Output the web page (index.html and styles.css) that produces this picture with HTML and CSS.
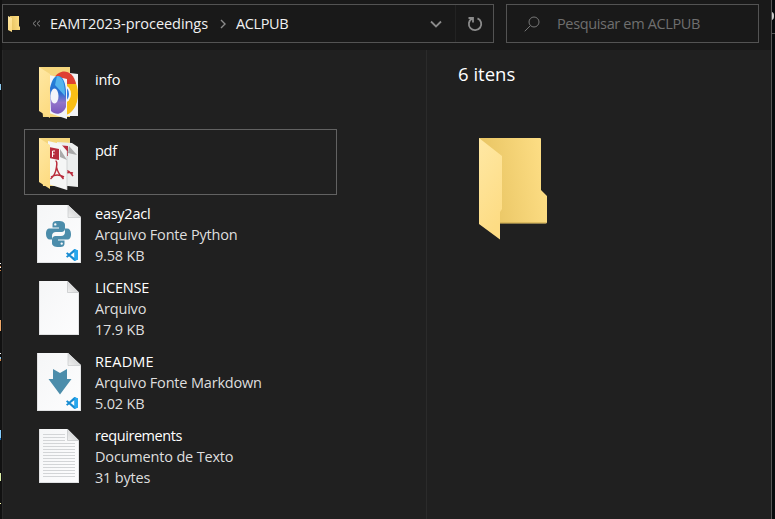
FILE: index.html
```
<!DOCTYPE html>
<html lang="pt-BR">
<head>
<meta charset="utf-8">
<title>ACLPUB</title>
<link rel="stylesheet" href="styles.css">
</head>
<body>
<svg class="defs" width="0" height="0" aria-hidden="true">
  <defs>
    <linearGradient id="back" x1="0" x2="1" y1="0.2" y2="0"><stop offset="0" stop-color="#e8c462"/><stop offset="1" stop-color="#ffe088"/></linearGradient>
    <linearGradient id="flap" x1="0" x2="0.3" y1="0" y2="1"><stop offset="0" stop-color="#ffe8a4"/><stop offset="1" stop-color="#fddc84"/></linearGradient>
    <linearGradient id="paper" x1="0" x2="1" y1="0" y2="1"><stop offset="0" stop-color="#f5f6f7"/><stop offset="1" stop-color="#fdfdfe"/></linearGradient>
    <linearGradient id="fold" x1="0" x2="1" y1="1" y2="0"><stop offset="0" stop-color="#f2f2f2"/><stop offset="1" stop-color="#bfc1c3"/></linearGradient>
    <linearGradient id="ring" x1="0" x2="0" y1="0" y2="1"><stop offset="0" stop-color="#2188dc"/><stop offset="0.45" stop-color="#286bd0"/><stop offset="0.7" stop-color="#9275cb"/><stop offset="1" stop-color="#7957bc"/></linearGradient>
    <symbol id="code" viewBox="0 0 12 12"><path d="M8.3 0 12 1.6v8.800L8.3 12 0 4.600 1.3 3.300 8.500 9V3L1.300 8.700 0 7.400z" fill="#168bd2"/><path d="M8.500 0 12 1.600v8.800L8.500 12z" fill="#27a7ee"/></symbol>
    <symbol id="page-large" viewBox="0 0 44 58"><path d="M0 0h31l13 12v46H0z" fill="url(#paper)"/><path d="M31 0v12.500h13z" fill="url(#fold)"/><path d="M31 0v12.500h13" fill="none" stroke="#c6c8ca" stroke-width=".7"/><path d="M.3 0v57.600h43.400V12" fill="none" stroke="#c9cbcd" stroke-width=".6"/></symbol>
    <symbol id="page-small" viewBox="0 0 40 54"><path d="M0 0h28.500L40 11.500V54H0z" fill="url(#paper)"/><path d="M28.500 0v11.500H40z" fill="url(#fold)"/><path d="M28.500 0v11.500H40" fill="none" stroke="#c2c4c6" stroke-width=".7"/><path d="M.3 0v53.600h39.400V11.500" fill="none" stroke="#c9cbcd" stroke-width=".6"/></symbol>
  </defs>
</svg>
<div class="desktop">
  <aside class="edge edge-left"><i class="m1"></i><i class="m2"></i><i class="m3"></i><i class="m4"></i><i class="m5"></i><i class="m6"></i><i class="m7"></i><i class="m8"></i></aside>
  <main class="window">
    <header class="toolbar">
      <nav class="address">
        <svg class="folder-mini" width="13" height="18" viewBox="0 0 13 18"><path d="M2 1h9v10l1 1v3H2z" fill="url(#back)"/><path d="M0 1l4 2v14l-4-2z" fill="url(#flap)"/></svg>
        <svg class="back-more" width="9" height="7" viewBox="0 0 9 7"><path d="M4 .7 1 3.500 4 6.300M8 .7 5 3.500 8 6.300" class="line dim"/></svg>
        <span class="crumb crumb-parent">EAMT2023-proceedings</span>
        <svg class="chevron" width="6" height="10" viewBox="0 0 6 10"><path d="M1 1l4 4-4 4" class="line"/></svg>
        <span class="crumb crumb-current">ACLPUB</span>
        <svg class="down" width="12" height="8" viewBox="0 0 12 8"><path d="M1 1.500l5 5 5-5" class="line heavy"/></svg>
        <span class="reload"><svg width="16" height="16" viewBox="0 0 16 16"><path d="M10.500 2.300A6.200 6.200 0 1 1 5 2.600M1.500 2H6v4.500" class="line heavy"/></svg></span>
      </nav>
      <div class="search">
        <svg width="16" height="16" viewBox="0 0 16 16"><circle cx="10" cy="6" r="5" class="line thin"/><path d="M6.400 9.600.7 15.300" class="line thin"/></svg>
        <span>Pesquisar em ACLPUB</span>
      </div>
    </header>
    <div class="content">
      <section class="files">
        <article class="item folder">
          <svg class="icon" width="70" height="64" viewBox="25 58 70 64">
            <path d="M39 67h31v50H43z" fill="#f5d67d"/>
            <path d="M62 72l16 2v42H61z" fill="#f1f2f4"/>
            <clipPath id="sheet"><path d="M54 68l24 6v43H54z"/></clipPath>
            <g clip-path="url(#sheet)"><ellipse cx="64" cy="94" rx="14" ry="21" fill="#f9be15"/><path d="M53 80C58 68 73 68 76 84H64z" fill="#df4032"/><ellipse cx="64" cy="94" rx="7" ry="9" fill="#f5f5f5"/><ellipse cx="64" cy="94" rx="5" ry="7" fill="#327ee4"/></g>
            <path d="M49 75l18 4v40l-18-6z" fill="#f2f4f8"/>
            <path d="M50 88C52 80 54 76 58 76c5 0 8 7 8 18v13c-3 7-10 9-15 4z" fill="url(#ring)"/>
            <path d="M57 76c5 0 8 6 8 20l-10-11z" fill="#54b4ed"/>
            <ellipse cx="54.500" cy="96" rx="4" ry="7.500" fill="#f2f4fa"/>
            <path d="M39 67l11 7v44l-11-7z" fill="url(#flap)"/>
          </svg>
          <div class="info"><span class="name">info</span></div>
        </article>
        <article class="item folder selected">
          <svg class="icon" width="69" height="64" viewBox="25 130 69 64">
            <path d="M39 138h31v48H43z" fill="#f5d67d"/>
            <path d="M57 142l15 1 6 4v40l-20-2z" fill="#eceeee"/>
            <path d="M57 145l11 1v10H57z" fill="#b72c3e"/><path d="M69 146l8 9-9-2z" fill="#aaa"/>
            <path d="M64 170q5 0 9 6M64 173q6-1 9 0" fill="none" stroke="#b92b3c" stroke-width="1.500"/>
            <path d="M48 141l13 3 6 7v39l-19-6z" fill="#f5f6f6"/>
            <path d="M67 151v39" stroke="#c5c7c8" stroke-width=".7"/>
            <path d="M49 147l10 2v11l-10-2z" fill="#b72c3e"/><path d="M60 149l7 11-7-3z" fill="#aaa"/>
            <path d="M52.500 157v-6h2.500M52.500 154h2" fill="none" stroke="#fff" stroke-width="1"/>
            <path d="M55.500 161q2 0 1 6-1 8-6 12M56.500 167q1 6 7 12M51 177q6-4 13 0" fill="none" stroke="#b92b3c" stroke-width="1.500"/>
            <path d="M39 138l11 7v44l-11-7z" fill="url(#flap)"/>
          </svg>
          <div class="info"><span class="name">pdf</span></div>
        </article>
        <article class="item">
          <svg class="icon" width="70" height="74" viewBox="25 201 70 74"><use href="#page-large" x="37" y="205" width="44" height="58"/>
            <g transform="translate(46 221)" fill="#4c8dab"><path id="snake" d="M12 0C7 0 6.500 1.500 6.500 4v2.500H13v1H4C1 7.500 0 9.500 0 13s1.500 5.500 4 5.500h2V15c0-2.500 1.500-4 4-4h5.500c2 0 3.500-1.500 3.500-3.500V4c0-2.500-2-4-7-4zM9.300 2.200a1.200 1.200 0 1 1 0 2.400 1.200 1.200 0 0 1 0-2.400z" fill-rule="evenodd"/><use href="#snake" transform="rotate(180 12.500 13)"/></g>
            <use href="#code" x="66" y="249" width="12" height="12"/></svg>
          <div class="info"><span class="name">easy2acl</span><span>Arquivo Fonte Python</span><span>9.58 KB</span></div>
        </article>
        <article class="item">
          <svg class="icon" width="70" height="74" viewBox="25 275 70 74"><use href="#page-small" x="39" y="281" width="40" height="54"/></svg>
          <div class="info"><span class="name">LICENSE</span><span>Arquivo</span><span>17.9 KB</span></div>
        </article>
        <article class="item">
          <svg class="icon" width="70" height="74" viewBox="25 349 70 74"><use href="#page-large" x="37" y="353" width="44" height="58"/><path d="M53 369l7 4 7-4v10h4.500L60 394.500 48.500 379H53z" fill="#4c8dab"/><use href="#code" x="66" y="397" width="12" height="12"/></svg>
          <div class="info"><span class="name wide">README</span><span>Arquivo Fonte Markdown</span><span>5.02 KB</span></div>
        </article>
        <article class="item">
          <svg class="icon" width="70" height="74" viewBox="25 423 70 74"><use href="#page-small" x="39" y="429" width="40" height="54"/><path d="M43 434.500h22M43 437.500h22M43 440.500h22M43 443.500h32M43 446.500h32M43 449.500h32M43 452.500h32M43 455.500h32M43 458.500h32M43 461.500h32M43 464.500h32M43 467.500h32M43 470.500h32M43 473.500h32M43 476.500h32" stroke="#d3d5d7"/></svg>
          <div class="info"><span class="name tight">requirements</span><span>Documento de Texto</span><span>31 bytes</span></div>
        </article>
      </section>
      <section class="details">
        <h1>6 itens</h1>
        <svg width="70" height="104" viewBox="478 137 70 104"><path d="M479 138h61q1 0 1 1v51l6 6v26q0 1.500-1.500 1.500H490z" fill="url(#back)"/><path d="M500 222.700h46" stroke="#c9a64c" stroke-width=".7"/><path d="M479 138l23 18v53l-2 3v27.500L479 224z" fill="url(#flap)"/></svg>
      </section>
    </div>
  </main>
  <aside class="edge edge-right"><i></i><b></b></aside>
</div>
</body>
</html>
```
FILE: styles.css
```
* { box-sizing: border-box; }
body { margin: 0; background: #101010; color: #fff; font: 14.5px/21px "Open Sans", "Noto Sans", sans-serif; overflow: hidden; }
svg { display: block; flex: none; }
.defs { position: absolute; }
.desktop { display: flex; width: 775px; height: 519px; }
.edge { position: relative; flex: none; overflow: hidden; }
.edge-left { width: 2px; background: #111; }
.edge-left i { position: absolute; left: 0; width: 1px; height: 3px; background: #fff; }
.edge-left .m1 { top: 84px; height: 6px; background: #8cc8ee; }
.edge-left .m2 { top: 263px; height: 8px; background: repeating-linear-gradient(#fff 0 1px, #111 1px 3px, #d68645 3px 4px); }
.edge-left .m3 { top: 320px; height: 11px; background: #f0a868; }
.edge-left .m4 { top: 353px; height: 1px; }
.edge-left .m5 { top: 357px; height: 4px; background: linear-gradient(#8cc8ee 50%, #d68645 50%); }
.edge-left .m6 { top: 430px; height: 10px; background: linear-gradient(#86cfff 80%, #1762a8 80%); }
.edge-left .m7 { top: 473px; height: 8px; background: #dcf0a8; }
.edge-left .m8 { top: 503px; height: 1px; background: #ffffae; }
.edge-right { width: 3px; background: #070b0d; }
.edge-right i { position: absolute; top: 12px; left: -3px; width: 5px; height: 8px; border: 2px solid #ccc; border-radius: 50%; }
.edge-right b { position: absolute; top: 33px; left: 0; width: 3px; height: 1px; background: #555; }
.window { display: flex; flex-direction: column; width: 770px; border-right: 1px solid #555; background: #191919; }
.toolbar { display: flex; gap: 12px; height: 50px; padding-top: 4px; }
.address, .search { display: flex; align-items: center; height: 39px; border: 1px solid #535353; }
.address { width: 492px; padding-left: 5px; }
.back-more { margin-left: 11px; }
.crumb { white-space: nowrap; color: #f1f1f1; }
.crumb-parent { width: 160px; margin-left: 9px; letter-spacing: -.05px; }
.chevron { margin-left: 10px; }
.crumb-current { margin-left: 10px; letter-spacing: -.4px; }
.down { margin-left: auto; margin-right: 13px; }
.reload { display: grid; place-items: center; width: 38px; height: 37px; border-left: 1px solid #232323; }
.line { fill: none; stroke: #8b8b8b; stroke-width: 1.4; }
.dim { stroke-width: 1; }
.heavy { stroke-width: 1.8; }
.thin { stroke: #777; stroke-width: 1; }
.search { width: 253px; padding-left: 17px; gap: 17px; color: #6f6f6f; white-space: nowrap; letter-spacing: -.35px; }
.content { display: flex; flex: 1; background: #202020; border-left: 1px solid #292929; }
.files { width: 424px; padding: 8px 0 0 21px; border-right: 1px solid #2b2b2b; }
.item { display: flex; width: 313px; height: 74px; padding-left: 1px; }
.item .info { padding-top: 2px; }
.folder { height: 66px; margin-bottom: 5px; }
.folder .info { padding-top: 11px; }
.selected { margin-bottom: 6px; padding-left: 0; border: 1px solid #626262; }
.selected .info { padding-top: 10px; padding-left: 1px; }
.info span { display: block; white-space: nowrap; color: #dedede; letter-spacing: -.18px; }
.info .name { color: #fff; letter-spacing: -.25px; }
.info .wide { letter-spacing: .15px; }
.info .tight { letter-spacing: -.42px; }
.details { padding: 12px 0 0 31px; }
h1 { margin: 0; font-size: 18.5px; line-height: 24px; font-weight: 400; letter-spacing: 0; }
.details svg { margin: 51px 0 0 20px; }
```
